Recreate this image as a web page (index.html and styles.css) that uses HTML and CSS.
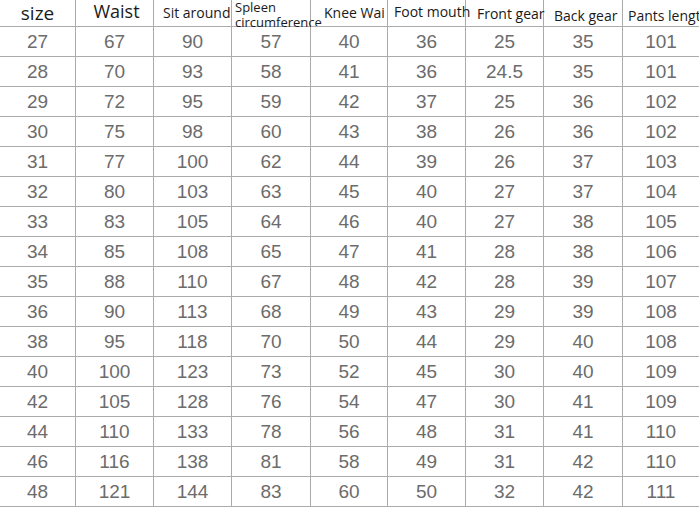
FILE: index.html
```html
<!DOCTYPE html>
<html>
<head>
<meta charset="utf-8">
<link rel="stylesheet" href="styles.css">
</head>
<body>
<div class="table">
  <div class="cell head h-size">size</div>
  <div class="cell head h-waist">Waist</div>
  <div class="cell head h-sit">Sit around</div>
  <div class="cell head h-spleen">Spleen<br>circumference</div>
  <div class="cell head h-knee">Knee Wai</div>
  <div class="cell head h-foot">Foot mouth</div>
  <div class="cell head h-front">Front gear</div>
  <div class="cell head h-back">Back gear</div>
  <div class="cell head h-pants">Pants length</div>

  <div class="cell">27</div><div class="cell">67</div><div class="cell">90</div><div class="cell">57</div><div class="cell">40</div><div class="cell">36</div><div class="cell">25</div><div class="cell">35</div><div class="cell">101</div>
  <div class="cell">28</div><div class="cell">70</div><div class="cell">93</div><div class="cell">58</div><div class="cell">41</div><div class="cell">36</div><div class="cell">24.5</div><div class="cell">35</div><div class="cell">101</div>
  <div class="cell">29</div><div class="cell">72</div><div class="cell">95</div><div class="cell">59</div><div class="cell">42</div><div class="cell">37</div><div class="cell">25</div><div class="cell">36</div><div class="cell">102</div>
  <div class="cell">30</div><div class="cell">75</div><div class="cell">98</div><div class="cell">60</div><div class="cell">43</div><div class="cell">38</div><div class="cell">26</div><div class="cell">36</div><div class="cell">102</div>
  <div class="cell">31</div><div class="cell">77</div><div class="cell">100</div><div class="cell">62</div><div class="cell">44</div><div class="cell">39</div><div class="cell">26</div><div class="cell">37</div><div class="cell">103</div>
  <div class="cell">32</div><div class="cell">80</div><div class="cell">103</div><div class="cell">63</div><div class="cell">45</div><div class="cell">40</div><div class="cell">27</div><div class="cell">37</div><div class="cell">104</div>
  <div class="cell">33</div><div class="cell">83</div><div class="cell">105</div><div class="cell">64</div><div class="cell">46</div><div class="cell">40</div><div class="cell">27</div><div class="cell">38</div><div class="cell">105</div>
  <div class="cell">34</div><div class="cell">85</div><div class="cell">108</div><div class="cell">65</div><div class="cell">47</div><div class="cell">41</div><div class="cell">28</div><div class="cell">38</div><div class="cell">106</div>
  <div class="cell">35</div><div class="cell">88</div><div class="cell">110</div><div class="cell">67</div><div class="cell">48</div><div class="cell">42</div><div class="cell">28</div><div class="cell">39</div><div class="cell">107</div>
  <div class="cell">36</div><div class="cell">90</div><div class="cell">113</div><div class="cell">68</div><div class="cell">49</div><div class="cell">43</div><div class="cell">29</div><div class="cell">39</div><div class="cell">108</div>
  <div class="cell">38</div><div class="cell">95</div><div class="cell">118</div><div class="cell">70</div><div class="cell">50</div><div class="cell">44</div><div class="cell">29</div><div class="cell">40</div><div class="cell">108</div>
  <div class="cell">40</div><div class="cell">100</div><div class="cell">123</div><div class="cell">73</div><div class="cell">52</div><div class="cell">45</div><div class="cell">30</div><div class="cell">40</div><div class="cell">109</div>
  <div class="cell">42</div><div class="cell">105</div><div class="cell">128</div><div class="cell">76</div><div class="cell">54</div><div class="cell">47</div><div class="cell">30</div><div class="cell">41</div><div class="cell">109</div>
  <div class="cell">44</div><div class="cell">110</div><div class="cell">133</div><div class="cell">78</div><div class="cell">56</div><div class="cell">48</div><div class="cell">31</div><div class="cell">41</div><div class="cell">110</div>
  <div class="cell">46</div><div class="cell">116</div><div class="cell">138</div><div class="cell">81</div><div class="cell">58</div><div class="cell">49</div><div class="cell">31</div><div class="cell">42</div><div class="cell">110</div>
  <div class="cell">48</div><div class="cell">121</div><div class="cell">144</div><div class="cell">83</div><div class="cell">60</div><div class="cell">50</div><div class="cell">32</div><div class="cell">42</div><div class="cell">111</div>
</div>
</body>
</html>
```
FILE: styles.css
```css
html, body {
  margin: 0;
  padding: 0;
  background: #ffffff;
  overflow: hidden;
}

.table {
  display: grid;
  grid-template-columns: 76px 78px 78px 79px 77px 78px 78px 79px 77px;
  grid-template-rows: 27px repeat(16, 30px);
  width: 700px;
}

.cell {
  box-sizing: border-box;
  border-right: 1px solid #ababab;
  border-bottom: 1px solid #ababab;
  font-family: "Liberation Sans", Arial, sans-serif;
  font-size: 19px;
  color: #6c6c6c;
  text-align: center;
  line-height: 28px;
  padding-top: 1px;
  white-space: nowrap;
}

.head {
  font-family: "Open Sans", "Noto Sans", sans-serif;
  color: #1a1a1a;
  font-size: 14px;
  line-height: 1;
  text-align: left;
  overflow: visible;
  position: relative;
}

.h-size { font-size: 19px; text-align: center; padding-top: 4px; }
.h-waist { font-size: 18px; text-align: center; padding-top: 2px; padding-left: 4px; }
.h-sit { padding-top: 6px; padding-left: 9px; }
.h-spleen { font-size: 13px; line-height: 15px; padding-top: 0; padding-left: 3px; }
.h-knee { padding-top: 6px; padding-left: 13px; }
.h-foot { padding-top: 5px; padding-left: 6px; }
.h-front { padding-top: 7px; padding-left: 11px; }
.h-back { padding-top: 9px; padding-left: 10px; }
.h-pants { padding-top: 9px; padding-left: 5px; }
```
